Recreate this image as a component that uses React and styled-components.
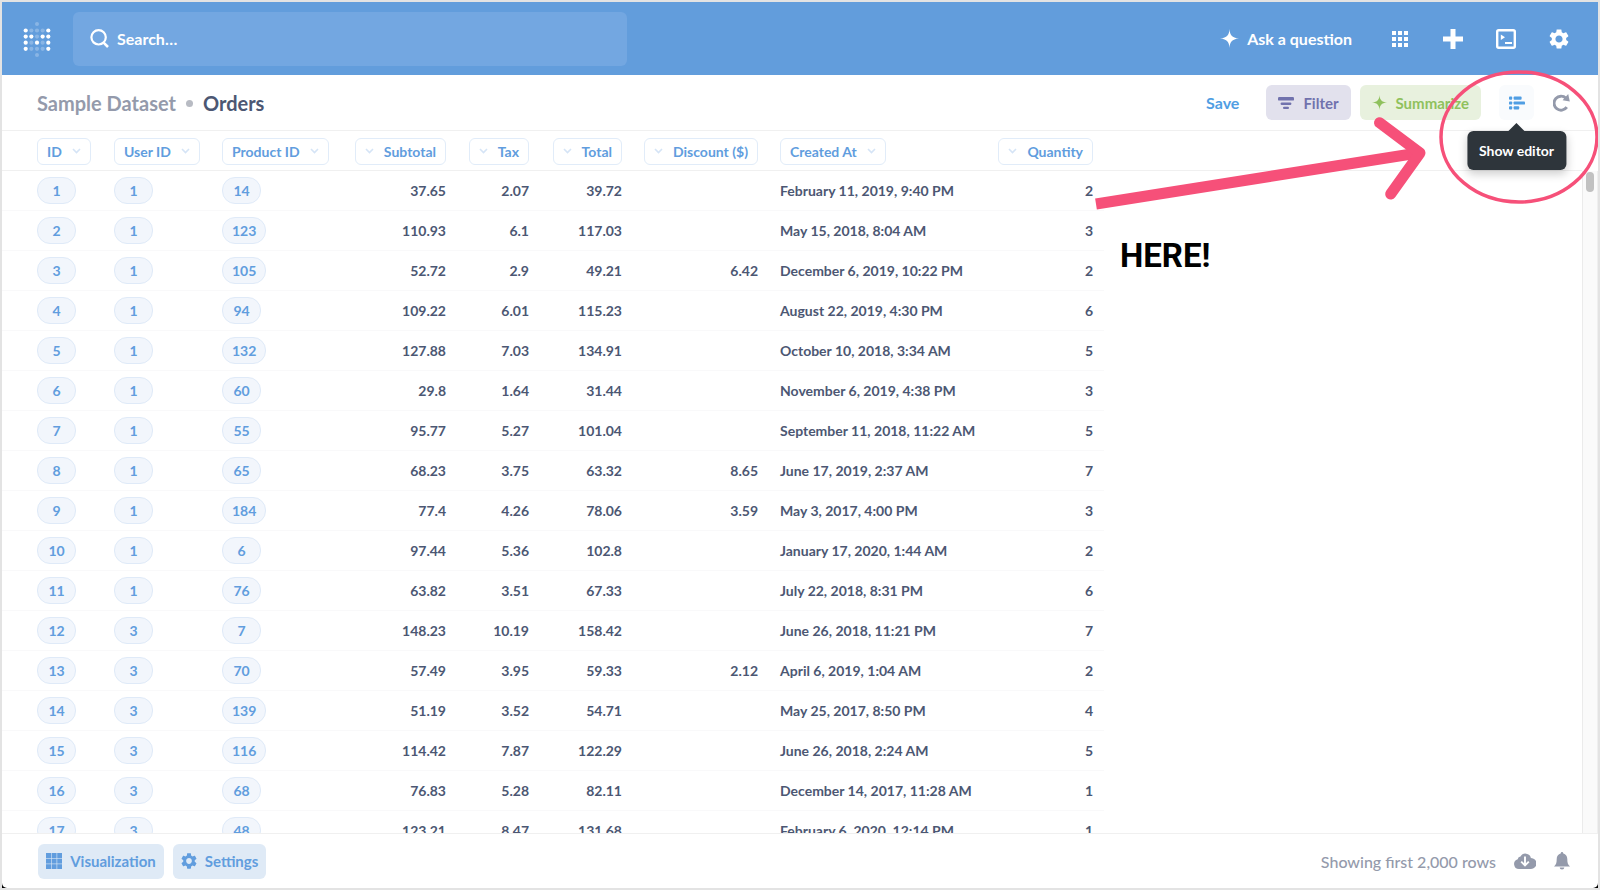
import React from 'react'
import styled, { createGlobalStyle } from 'styled-components'


const GlobalStyle = createGlobalStyle`
  * {
    box-sizing: border-box;
  }
  body {
    margin: 0;
    font-family: Lato, "Liberation Sans", sans-serif;
    font-weight: 700;
    color: #4C5773;
  }
  button, input {
    font: inherit;
    border: none;
    padding: 0;
  }
  button {
    cursor: pointer;
    background: transparent;
  }
  svg {
    display: block;
    flex-shrink: 0;
  }
`
const Frame = styled.div`
  position: relative;
  height: 100vh;
  padding: 0;
  border: 2px solid #E3E3E3;
  background: #000000;
  overflow: hidden;
`
const Window = styled.div`
  display: flex;
  flex-direction: column;
  height: 100%;
  background: #FFFFFF;
  border-radius: 0 0 5px 5px;
  overflow: hidden;
`
const NavBar = styled.header`
  display: flex;
  align-items: center;
  flex-shrink: 0;
  height: 73px;
  padding: 0 29px 0 20px;
  background: #629DDC;
  color: #FFFFFF;
  font-size: 16px;
`
const LogoLink = styled.a`
  display: block;
  margin-right: 21px;
`
const SearchBox = styled.label`
  display: flex;
  align-items: center;
  gap: 8px;
  flex: 0 1 554px;
  height: 54px;
  padding: 0 17px;
  border-radius: 6px;
  background: #73A7E1;
  input {
    flex: 1;
    min-width: 0;
    color: #FFFFFF;
    background: transparent;
    outline: none;
  }
  input::placeholder {
    color: #FFFFFF;
    opacity: 1;
  }
`
const NavActions = styled.nav`
  display: flex;
  align-items: center;
  gap: 33px;
  margin-left: auto;
`
const AskLink = styled.a`
  display: flex;
  align-items: center;
  gap: 8px;
  margin-right: 5px;
  color: #FFFFFF;
  text-decoration: none;
`
const IconButton = styled.button`
  display: flex;
  align-items: center;
  justify-content: center;
  min-width: ${props => props.$minWidth || '0'};
  color: ${props => props.$color || '#FFFFFF'};
`
const QuestionBar = styled.div`
  display: flex;
  align-items: center;
  flex-shrink: 0;
  height: 56px;
  padding: 0 28px 0 35px;
  border-bottom: 1px solid #F0F0F0;
`
const Title = styled.h1`
  display: flex;
  align-items: center;
  gap: 10px;
  margin: 0;
  font-size: 20px;
  line-height: 24px;
  font-weight: 700;
  a {
    color: #949AAB;
    text-decoration: none;
  }
`
const Dot = styled.span`
  width: 7px;
  height: 7px;
  margin-top: 2px;
  border-radius: 50%;
  background: #B8BBC3;
`
const QuestionActions = styled.div`
  display: flex;
  align-items: center;
  margin-left: auto;
`
const SaveButton = styled.button`
  margin-right: 27px;
  font-size: 16px;
  color: #509EE3;
`
const ActionButton = styled.button`
  display: flex;
  align-items: center;
  gap: 9px;
  height: 35px;
  margin-right: ${props => props.$gap};
  padding: 0 12px;
  border-radius: 6px;
  font-size: 15px;
  background: ${props => props.$background};
  color: ${props => props.$color};
`
const EditorWrapper = styled.div`
  position: relative;
  margin-right: 19px;
`
const EditorButton = styled(IconButton)`
  width: 35px;
  height: 35px;
  border-radius: 6px;
  background: #F9FBFD;
`
const Tooltip = styled.div`
  position: absolute;
  z-index: 2;
  top: 46px;
  left: 50%;
  transform: translateX(-50%);
  padding: 0 12px;
  border-radius: 6px;
  font-size: 14px;
  line-height: 39px;
  white-space: nowrap;
  color: #FFFFFF;
  background: #2E353B;
  box-shadow: 0 4px 10px rgba(0, 0, 0, 0.2);
  &::before {
    content: "";
    position: absolute;
    top: -8px;
    left: 50%;
    margin-left: -9px;
    border: 9px solid transparent;
    border-top: none;
    border-bottom-color: #2E353B;
  }
`
const Results = styled.main`
  display: flex;
  flex: 1;
  min-height: 0;
  overflow: hidden;
`
const TableArea = styled.div`
  flex: 1;
  min-width: 0;
  overflow: hidden;
`
const DataTable = styled.table`
  width: 100%;
  table-layout: fixed;
  border-collapse: separate;
  border-spacing: 0;
  font-size: 14px;
`
const HeaderCell = styled.th`
  height: 40px;
  padding: 1px 11px 0 ${props => (props.$first ? '35px' : '11px')};
  font-weight: inherit;
  text-align: ${props => (props.$right ? 'right' : 'left')};
  border-bottom: 1px solid #F0F0F0;
`
const ColumnButton = styled.button`
  display: inline-flex;
  flex-direction: ${props => (props.$right ? 'row-reverse' : 'row')};
  align-items: center;
  gap: 10px;
  height: 27px;
  padding: 0 9px;
  border: 1px solid #E1ECF9;
  border-radius: 6px;
  font-size: 14px;
  white-space: nowrap;
  color: #619DDE;
  vertical-align: middle;
  svg {
    color: #D5E4F6;
  }
`
const Cell = styled.td`
  height: 40px;
  padding: 0 11px 0 ${props => (props.$first ? '35px' : '11px')};
  text-align: ${props => (props.$right ? 'right' : 'left')};
  white-space: nowrap;
  border-bottom: 1px solid #F9F9FA;
`
const FillCell = styled.td`
  padding: 0;
`
const KeyLink = styled.a`
  display: inline-block;
  min-width: 39px;
  padding: 0 9px;
  border: 1px solid #DFEAF8;
  border-radius: 13px;
  line-height: 25px;
  text-align: center;
  text-decoration: none;
  vertical-align: middle;
  color: #619DDE;
  background: #F2F6FC;
`
const ScrollTrack = styled.div`
  width: 16px;
  margin-top: 40px;
  padding: 1px 3px;
  border-left: 1px solid #EBEBEB;
  border-right: 1px solid #EFEFEF;
  background: #FAFAFA;
`
const ScrollThumb = styled.div`
  height: 20px;
  border-radius: 5px;
  background: #C1C1C1;
`
const Footer = styled.footer`
  display: flex;
  align-items: center;
  flex-shrink: 0;
  height: 55px;
  padding: 0 28px 0 36px;
  border-top: 1px solid #F0F0F0;
`
const FooterButton = styled.button`
  display: flex;
  align-items: center;
  gap: 8px;
  height: 35px;
  margin-right: 9px;
  padding: 0 8px;
  border-radius: 6px;
  font-size: 15px;
  color: #619DDE;
  background: #DFEAF6;
`
const RowCount = styled.span`
  margin-left: auto;
  margin-right: 18px;
  font-size: 16px;
  font-weight: 500;
  color: #949AAB;
`
const FooterIcons = styled.div`
  display: flex;
  align-items: center;
  gap: 18px;
`
const Annotation = styled.div`
  position: absolute;
  z-index: 3;
  top: 58px;
  right: -2px;
  width: 520px;
  height: 220px;
  pointer-events: none;
`
const Callout = styled.p`
  position: absolute;
  top: 176px;
  left: 40px;
  margin: 0;
  font-family: Roboto, sans-serif;
  font-size: 33px;
  line-height: 40px;
  font-weight: 700;
  color: #000000;
`

const columns = [
  { name: 'ID', width: 101, link: true },
  { name: 'User ID', width: 108, link: true },
  { name: 'Product ID', width: 132, link: true },
  { name: 'Subtotal', width: 114, right: true },
  { name: 'Tax', width: 83, right: true },
  { name: 'Total', width: 93, right: true },
  { name: 'Discount ($)', width: 136, right: true },
  { name: 'Created At', width: 216 },
  { name: 'Quantity', width: 119, right: true },
]

const orders = [
  [1, 1, 14, '37.65', '2.07', '39.72', '', 'February 11, 2019, 9:40 PM', 2],
  [2, 1, 123, '110.93', '6.1', '117.03', '', 'May 15, 2018, 8:04 AM', 3],
  [3, 1, 105, '52.72', '2.9', '49.21', '6.42', 'December 6, 2019, 10:22 PM', 2],
  [4, 1, 94, '109.22', '6.01', '115.23', '', 'August 22, 2019, 4:30 PM', 6],
  [5, 1, 132, '127.88', '7.03', '134.91', '', 'October 10, 2018, 3:34 AM', 5],
  [6, 1, 60, '29.8', '1.64', '31.44', '', 'November 6, 2019, 4:38 PM', 3],
  [7, 1, 55, '95.77', '5.27', '101.04', '', 'September 11, 2018, 11:22 AM', 5],
  [8, 1, 65, '68.23', '3.75', '63.32', '8.65', 'June 17, 2019, 2:37 AM', 7],
  [9, 1, 184, '77.4', '4.26', '78.06', '3.59', 'May 3, 2017, 4:00 PM', 3],
  [10, 1, 6, '97.44', '5.36', '102.8', '', 'January 17, 2020, 1:44 AM', 2],
  [11, 1, 76, '63.82', '3.51', '67.33', '', 'July 22, 2018, 8:31 PM', 6],
  [12, 3, 7, '148.23', '10.19', '158.42', '', 'June 26, 2018, 11:21 PM', 7],
  [13, 3, 70, '57.49', '3.95', '59.33', '2.12', 'April 6, 2019, 1:04 AM', 2],
  [14, 3, 139, '51.19', '3.52', '54.71', '', 'May 25, 2017, 8:50 PM', 4],
  [15, 3, 116, '114.42', '7.87', '122.29', '', 'June 26, 2018, 2:24 AM', 5],
  [16, 3, 68, '76.83', '5.28', '82.11', '', 'December 14, 2017, 11:28 AM', 1],
  [17, 3, 48, '123.21', '8.47', '131.68', '', 'February 6, 2020, 12:14 PM', 1],
]

// 1 is a bright dot, 0 a faded one
const logoRows = ['10001', '11011', '10101', '10001']

function Logo() {
  return (
    <svg width="30" height="38" viewBox="0 0 30 38" fill="#FFFFFF">
      <circle cx="15" cy="4" r="2" opacity="0.25" />
      {logoRows.map((row, y) =>
        row.split('').map((dot, x) => (
          <circle
            key={`${x}-${y}`}
            cx={3.7 + x * 5.65}
            cy={10.5 + y * 6.1}
            r="2.1"
            opacity={dot === '1' ? 1 : 0.25}
          />
        ))
      )}
      <circle cx="15" cy="35" r="2" opacity="0.25" />
    </svg>
  )
}

function SearchIcon() {
  return (
    <svg width="19" height="19" viewBox="0 0 19 19" fill="none" stroke="currentColor">
      <circle cx="8.6" cy="8.3" r="7.2" strokeWidth="2.2" />
      <path d="M13.6 13.6l4.4 4.4" strokeWidth="2.6" />
    </svg>
  )
}

function SparkIcon({ size }) {
  return (
    <svg width={size} height={size} viewBox="0 0 20 20" fill="currentColor">
      <path d="M10 0c.5 6.5 2.4 9.2 10 10-7.6.8-9.5 3.5-10 10-.5-6.5-2.4-9.2-10-10 7.600-.8 9.500-3.500 10-10z" />
    </svg>
  )
}

function GridIcon({ cell, gap }) {
  const size = cell * 3 + gap * 2
  return (
    <svg width={size} height={size} fill="currentColor">
      {[0, 1, 2].map(y =>
        [0, 1, 2].map(x => (
          <rect
            key={`${x}-${y}`}
            x={x * (cell + gap)}
            y={y * (cell + gap)}
            width={cell}
            height={cell}
          />
        ))
      )}
    </svg>
  )
}

function PlusIcon() {
  return (
    <svg width="20" height="20" viewBox="0 0 20 20" fill="currentColor">
      <path d="M7.5 0h5v7.5H20v5h-7.5V20h-5v-7.5H0v-5h7.5z" />
    </svg>
  )
}

function TerminalIcon() {
  return (
    <svg width="20" height="20" viewBox="0 0 20 20" fill="none">
      <rect x="1.2" y="1.2" width="17.6" height="17.6" rx="1.5" stroke="currentColor" strokeWidth="2.4" />
      <path d="M4.8 5.5l4.2 2.8-4.2 2.8z" fill="currentColor" />
      <path d="M9 14h7" stroke="currentColor" strokeWidth="2" />
    </svg>
  )
}

function GearIcon({ size }) {
  return (
    <svg width={size} height={size} viewBox="2.2 2 19.6 20" fill="currentColor">
      <path d="M19.14 12.94c.04-.3.06-.61.06-.94 0-.32-.02-.64-.07-.94l2.03-1.58c.18-.14.23-.41.12-.61l-1.92-3.32c-.12-.22-.37-.29-.59-.22l-2.39.96c-.5-.38-1.03-.7-1.62-.94l-.36-2.54c-.04-.24-.24-.41-.48-.41h-3.84c-.24 0-.43.17-.47.41l-.36 2.54c-.59.24-1.13.57-1.62.94l-2.39-.96c-.22-.08-.47 0-.59.22L2.74 8.87c-.12.21-.08.47.12.61l2.03 1.58c-.05.3-.09.63-.09.94s.02.64.07.94l-2.03 1.58c-.18.14-.23.41-.12.61l1.92 3.32c.12.22.37.29.59.22l2.39-.96c.5.38 1.03.7 1.62.94l.36 2.54c.05.24.24.41.48.41h3.84c.24 0 .44-.17.47-.41l.36-2.54c.59-.24 1.13-.56 1.62-.94l2.39.96c.22.08.47 0 .59-.22l1.92-3.32c.12-.22.07-.47-.12-.61l-2.01-1.58zM12 15.6c-1.98 0-3.6-1.62-3.6-3.6s1.62-3.6 3.6-3.6 3.6 1.62 3.6 3.6-1.62 3.6-3.6 3.6z" />
    </svg>
  )
}

function FilterIcon() {
  return (
    <svg width="16" height="14" viewBox="0 0 16 14" fill="currentColor">
      <rect x="0" y="1" width="16" height="3.6" rx="1.2" />
      <rect x="2.6" y="6.4" width="10.8" height="2.6" rx="1.2" />
      <rect x="5" y="10.8" width="6" height="2.2" rx="1.1" />
    </svg>
  )
}

function NotebookIcon() {
  return (
    <svg width="16" height="14" viewBox="0 0 16 14" fill="currentColor">
      <rect x="0" y="0.5" width="3.2" height="3.2" rx="0.9" />
      <rect x="4.6" y="0.5" width="8" height="3.2" rx="0.9" />
      <rect x="0" y="5.4" width="3.2" height="3.2" rx="0.9" />
      <rect x="4.6" y="5.4" width="11.4" height="3.2" rx="0.9" />
      <rect x="0" y="10.3" width="3.2" height="3.2" rx="0.9" />
      <rect x="4.6" y="10.3" width="5.6" height="3.2" rx="0.9" />
    </svg>
  )
}

function RefreshIcon() {
  return (
    <svg width="17" height="18" viewBox="0 0 17 18">
      <path d="M13.8 13.2A7 7 0 1 1 13 4.2" fill="none" stroke="currentColor" strokeWidth="2.9" />
      <path d="M15.2 0l1.6 7.4-7.2-1.2z" fill="currentColor" />
    </svg>
  )
}

function ChevronIcon() {
  return (
    <svg width="9" height="6" viewBox="0 0 9 6" fill="none" stroke="currentColor" strokeWidth="1.6">
      <path d="M1 1l3.5 3.5L8 1" />
    </svg>
  )
}

function DownloadIcon() {
  return (
    <svg width="22" height="16" viewBox="0 0 22 16" fill="currentColor">
      <path d="M5 16a5 5 0 0 1-1.3-9.8A3.3 3.3 0 0 1 6.5 3.6 5.6 5.6 0 0 1 16.9 5 5.5 5.5 0 0 1 17 16z" />
      <path d="M11 3.6v8.6M7.2 8.6l3.8 3.8 3.8-3.8" fill="none" stroke="#FFFFFF" strokeWidth="1.9" />
    </svg>
  )
}

function BellIcon() {
  return (
    <svg width="16" height="18" viewBox="0 0 16 18" fill="currentColor">
      <path d="M8 0c.8 0 1.3.6 1.3 1.5 2.5.6 4 2.7 4 5.5 0 3.6.5 5.6 2.7 7.5H0c2.2-1.9 2.7-3.9 2.7-7.5 0-2.8 1.5-4.9 4-5.5C6.7.6 7.2 0 8 0z" />
      <path d="M5.7 15.5h4.6A2.3 2 0 0 1 5.7 15.5z" />
    </svg>
  )
}

function OrdersTable() {
  return (
    <DataTable>
      <colgroup>
        {columns.map(column => (
          <col key={column.name} style={{ width: column.width }} />
        ))}
        <col />
      </colgroup>
      <thead>
        <tr>
          {columns.map((column, i) => (
            <HeaderCell key={column.name} $first={i === 0} $right={column.right}>
              <ColumnButton $right={column.right}>
                {column.name}
                <ChevronIcon />
              </ColumnButton>
            </HeaderCell>
          ))}
          <HeaderCell as="td" />
        </tr>
      </thead>
      <tbody>
        {orders.map(order => (
          <tr key={order[0]}>
            {order.map((value, i) => (
              <Cell key={columns[i].name} $first={i === 0} $right={columns[i].right}>
                {columns[i].link ? <KeyLink href="#">{value}</KeyLink> : value}
              </Cell>
            ))}
            <FillCell />
          </tr>
        ))}
      </tbody>
    </DataTable>
  )
}

function App() {
  return (
    <Frame>
      <GlobalStyle />
      <Window>
        <NavBar>
          <LogoLink href="#" aria-label="Home">
            <Logo />
          </LogoLink>
          <SearchBox>
            <SearchIcon />
            <input type="text" placeholder="Search…" aria-label="Search" />
          </SearchBox>
          <NavActions>
            <AskLink href="#">
              <SparkIcon size={19} />
              Ask a question
            </AskLink>
            <IconButton $minWidth="20px" aria-label="Browse data">
              <GridIcon cell={4} gap={2} />
            </IconButton>
            <IconButton $minWidth="20px" aria-label="Create">
              <PlusIcon />
            </IconButton>
            <IconButton $minWidth="20px" aria-label="Write SQL">
              <TerminalIcon />
            </IconButton>
            <IconButton $minWidth="20px" aria-label="Admin settings">
              <GearIcon size={20} />
            </IconButton>
          </NavActions>
        </NavBar>
        <QuestionBar>
          <Title>
            <a href="#">Sample Dataset</a>
            <Dot />
            Orders
          </Title>
          <QuestionActions>
            <SaveButton>Save</SaveButton>
            <ActionButton $background="#E2E1ED" $color="#7172AD" $gap="9px">
              <FilterIcon />
              Filter
            </ActionButton>
            <ActionButton $background="#E8F1DE" $color="#8FC15D" $gap="18px">
              <SparkIcon size={15} />
              Summarize
            </ActionButton>
            <EditorWrapper>
              <EditorButton $color="#509EE3" aria-label="Show editor" aria-describedby="editor-tip">
                <NotebookIcon />
              </EditorButton>
              <Tooltip id="editor-tip" role="tooltip">Show editor</Tooltip>
            </EditorWrapper>
            <IconButton $color="#949AAB" aria-label="Refresh">
              <RefreshIcon />
            </IconButton>
          </QuestionActions>
        </QuestionBar>
        <Results>
          <TableArea>
            <OrdersTable />
          </TableArea>
          <ScrollTrack>
            <ScrollThumb />
          </ScrollTrack>
        </Results>
        <Footer>
          <FooterButton>
            <GridIcon cell={5} gap={0.6} />
            Visualization
          </FooterButton>
          <FooterButton>
            <GearIcon size={16} />
            Settings
          </FooterButton>
          <RowCount>Showing first 2,000 rows</RowCount>
          <FooterIcons>
            <IconButton $color="#949AAB" aria-label="Download results">
              <DownloadIcon />
            </IconButton>
            <IconButton $color="#949AAB" aria-label="Create alert">
              <BellIcon />
            </IconButton>
          </FooterIcons>
        </Footer>
      </Window>
      <Annotation>
        <svg width="520" height="220" viewBox="0 0 520 220" fill="none" stroke="#F65079">
          <path d="M16 144L338 93" strokeWidth="11" />
          <path
            d="M299.5 62.7L340 93L310.7 134"
            strokeWidth="11"
            strokeLinecap="round"
            strokeLinejoin="round"
          />
          <ellipse cx="439" cy="77" rx="78" ry="65" strokeWidth="3.5" />
        </svg>
        <Callout>HERE!</Callout>
      </Annotation>
    </Frame>
  )
}

export default App
